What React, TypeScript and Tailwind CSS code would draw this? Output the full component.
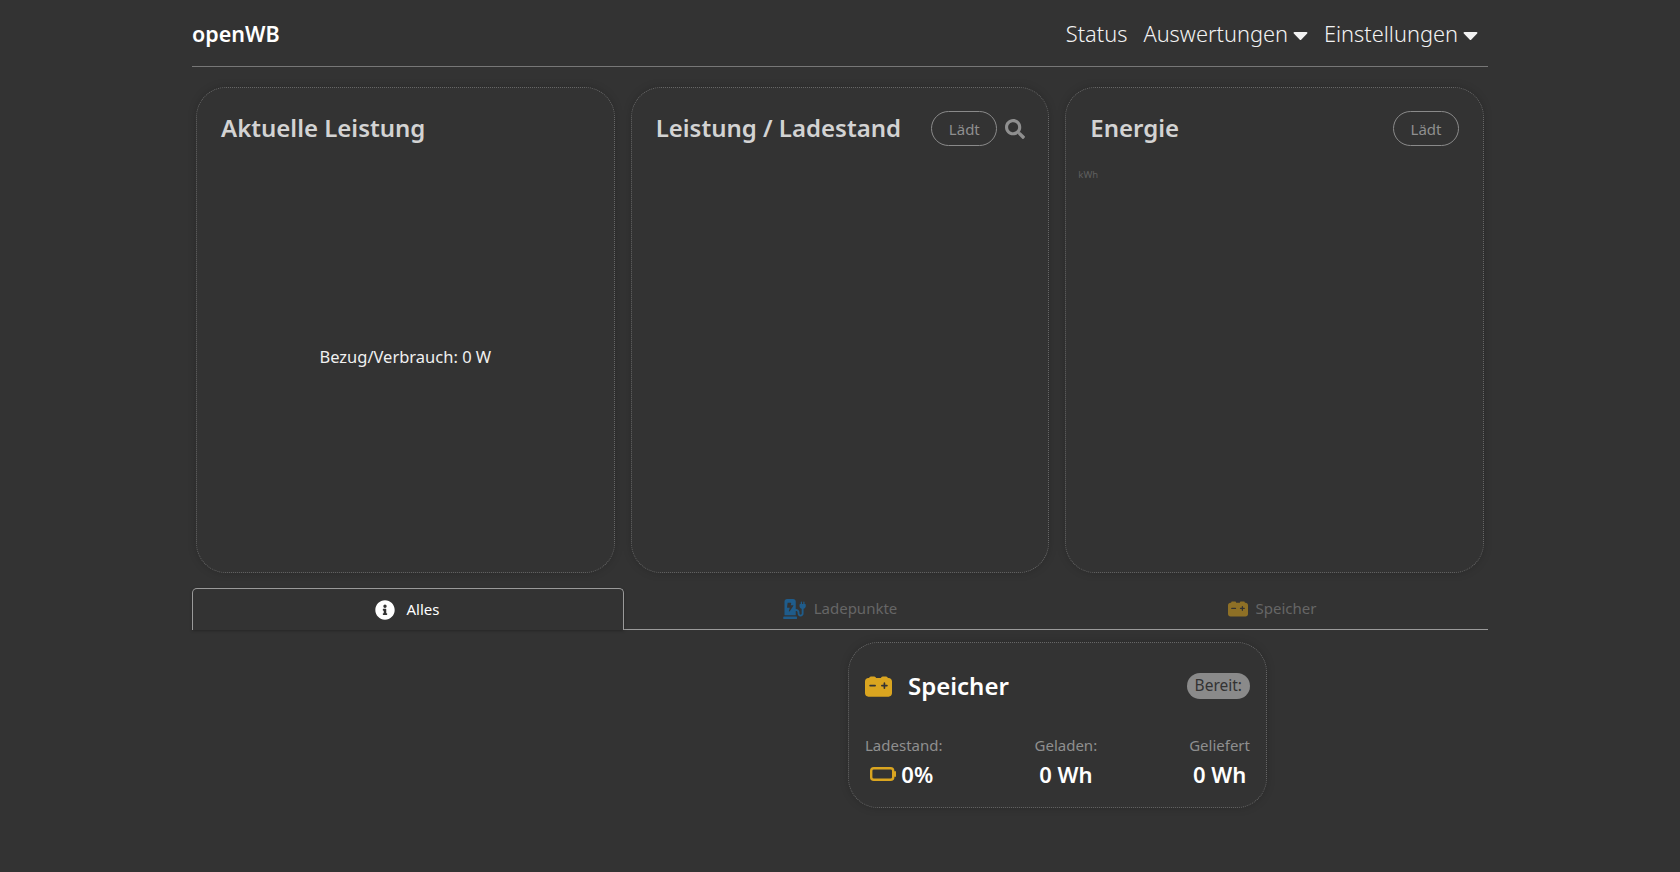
import { FaCaretDown, FaChargingStation, FaInfoCircle, FaSearch } from 'react-icons/fa';
import { FaCarBattery } from 'react-icons/fa6';

function NavMenu({ label }: { label: string }) {
  return (
    <span className="flex items-center gap-[5px]">
      {label}
      <FaCaretDown className="w-[15px] h-[24px] mt-px" />
    </span>
  );
}

function LoadBadge() {
  return (
    <span className="flex items-center justify-center w-[66px] h-[35px] mt-px pt-px rounded-full border border-[#8a8a8a] text-[15px] text-[#8f8f8f]">
      Lädt
    </span>
  );
}

function Panel({ title, children, actions }: { title: string; children?: React.ReactNode; actions?: React.ReactNode }) {
  return (
    <section className="relative h-[486px] rounded-[30px] border border-dotted border-[#666] bg-[#333] shadow-[0_0_8px_rgba(0,0,0,0.18)] px-6 pt-[22px]">
      <div className="flex items-center justify-between h-[36px]">
        <h2 className="text-[24px] font-semibold text-[#d3d3d3]">{title}</h2>
        {actions}
      </div>
      {children}
    </section>
  );
}

function Tab({ active, children }: { active?: boolean; children: React.ReactNode }) {
  if (active) {
    return (
      <div className="flex items-center justify-center gap-3 h-[42px] -mb-px pr-0.5 rounded-t-[5px] border border-b-0 border-[#9a9a9a] bg-[#333] text-[15px] text-white shadow-[0_1px_3px_rgba(0,0,0,0.25)]">
        {children}
      </div>
    );
  }
  return <div className="flex items-center justify-center gap-2 h-[41px] text-[15px] text-[#666]">{children}</div>;
}

function Stat({ label, value, icon }: { label: string; value: string; icon?: React.ReactNode }) {
  return (
    <div className="flex flex-col items-center">
      <span className="text-[15px] leading-[24px] text-[#8f8f8f]">{label}</span>
      <span className="flex items-center gap-[5px] mt-[2px] text-[22px] leading-[30px] font-semibold text-white">
        {icon}
        {value}
      </span>
    </div>
  );
}

export default function App() {
  return (
    <div className="min-h-[872px] bg-[#333] text-white" style={{ fontFamily: '"Noto Sans", sans-serif' }}>
      <div className="mx-auto w-[1296px]">
        <nav className="flex items-center justify-between h-[67px] border-b border-[#777]">
          <span className="pt-0.5 text-[21.5px] font-semibold">openWB</span>
          <div className="flex items-center gap-4 pr-[10px] pt-0.5 text-[21.8px] font-light text-[#f2f2f2]">
            <span>Status</span>
            <NavMenu label="Auswertungen" />
            <NavMenu label="Einstellungen" />
          </div>
        </nav>

        <div className="grid grid-cols-3 gap-4 pl-1 pr-1 mt-5">
          <Panel title="Aktuelle Leistung">
            <p className="mt-[199px] text-center text-[16.5px] text-[#f0f0f0]">Bezug/Verbrauch: 0 W</p>
          </Panel>
          <Panel
            title="Leistung / Ladestand"
            actions={
              <div className="flex items-center gap-2 -mr-px">
                <LoadBadge />
                <FaSearch className="w-[20px] h-[20px] mt-px text-[#8f8f8f]" />
              </div>
            }
          />
          <Panel title="Energie" actions={<LoadBadge />}>
            <span className="absolute left-[12px] top-[80px] text-[9.5px] text-[#5f5f5f]">kWh</span>
          </Panel>
        </div>

        <div className="grid grid-cols-3 mt-[15px] border-b border-[#9a9a9a]">
          <Tab active>
            <FaInfoCircle className="w-5 h-5" />
            <span>Alles</span>
          </Tab>
          <Tab>
            <FaChargingStation className="w-[23px] h-[20px] text-[#1f5c8b]" />
            <span>Ladepunkte</span>
          </Tab>
          <Tab>
            <FaCarBattery className="w-5 h-5 text-[#8e7026]" />
            <span>Speicher</span>
          </Tab>
        </div>

        <section className="ml-[656px] mt-[12px] w-[419px] h-[166px] rounded-[30px] border border-dotted border-[#666] shadow-[0_0_8px_rgba(0,0,0,0.18)] px-4 pt-[25px]">
          <div className="flex items-center justify-between h-[36px]">
            <div className="flex items-center gap-4">
              <FaCarBattery className="w-[27px] h-[27px] text-[#daa520]" />
              <h3 className="text-[24px] font-semibold">Speicher</h3>
            </div>
            <span className="rounded-full bg-[#8a8a8a] px-2 py-px text-[15.5px] text-[#333]">Bereit:</span>
          </div>
          <div className="flex justify-between mt-[29px]">
            <Stat
              label="Ladestand:"
              value="0%"
              icon={
                <svg viewBox="0 0 26 14" className="w-[26px] h-[14px] -ml-1 text-[#daa520]" fill="none" stroke="currentColor">
                  <rect x="1.2" y="1.2" width="22" height="11.6" rx="2.6" strokeWidth="2.4" />
                  <path d="M25 5v4" strokeWidth="2" strokeLinecap="round" />
                </svg>
              }
            />
            <Stat label="Geladen:" value="0 Wh" />
            <Stat label="Geliefert" value="0 Wh" />
          </div>
        </section>
      </div>
    </div>
  );
}
